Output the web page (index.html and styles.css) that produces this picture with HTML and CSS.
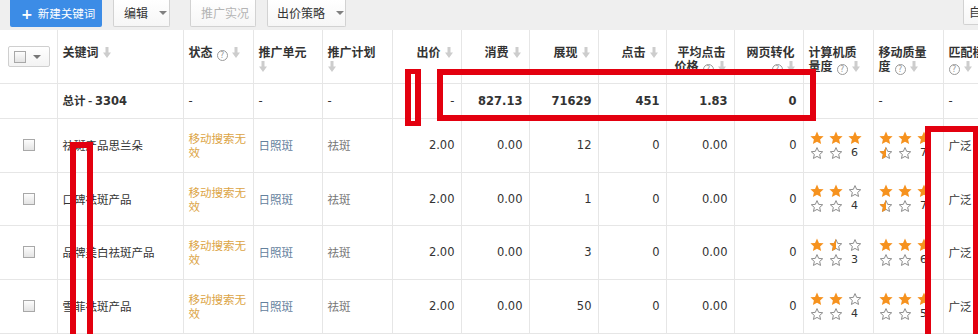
FILE: index.html
```html
<!DOCTYPE html>
<html lang="zh">
<head>
<meta charset="utf-8">
<title>关键词</title>
<link rel="stylesheet" href="styles.css">
</head>
<body>
<svg class="defs" width="0" height="0" aria-hidden="true">
  <defs>
    <symbol id="star-full" viewBox="0 0 14 14">
      <path d="M7 0.6l1.95 4.3 4.65 0.45-3.5 3.1 1.02 4.6L7 10.7l-4.12 2.35 1.02-4.6-3.5-3.1 4.65-0.45z" fill="#f6921e"/>
    </symbol>
    <symbol id="star-empty" viewBox="0 0 14 14">
      <path d="M7 1.6l1.65 3.75 4.05 0.4-3.05 2.7 0.9 4-3.55-2.05-3.55 2.05 0.9-4-3.05-2.7 4.05-0.4z" fill="#fff" stroke="#8c8c8c" stroke-width="1"/>
    </symbol>
    <clipPath id="half-clip"><rect x="0" y="0" width="7" height="14"/></clipPath>
    <symbol id="star-half" viewBox="0 0 14 14">
      <path d="M7 1.6l1.65 3.75 4.05 0.4-3.05 2.7 0.9 4-3.55-2.05-3.55 2.05 0.9-4-3.05-2.7 4.05-0.4z" fill="#fff" stroke="#8c8c8c" stroke-width="1"/>
      <path clip-path="url(#half-clip)" d="M7 0.6l1.95 4.3 4.65 0.45-3.5 3.1 1.02 4.6L7 10.7l-4.12 2.35 1.02-4.6-3.5-3.1 4.65-0.45z" fill="#f6921e"/>
    </symbol>
    <symbol id="sort" viewBox="0 0 8 11">
      <path d="M2.5 0h3v5.5H8L4 11 0 5.5h2.5z" fill="#cdcdcd"/>
    </symbol>
  </defs>
</svg>

<div class="page">
  <div class="toolbar">
    <button class="btn btn-primary"><span class="plus">+</span>新建关键词</button>
    <button class="btn btn-edit">编辑<i class="caret"></i></button>
    <button class="btn btn-disabled">推广实况</button>
    <button class="btn btn-bid">出价策略<i class="caret"></i></button>
    <button class="btn btn-right">自</button>
  </div>

  <table class="grid">
    <colgroup>
      <col class="c-check"><col class="c-kw"><col class="c-70"><col class="c-69"><col class="c-70">
      <col class="c-69"><col class="c-68"><col class="c-69"><col class="c-68"><col class="c-68">
      <col class="c-69"><col class="c-70"><col class="c-70"><col class="c-match">
    </colgroup>
    <thead>
      <tr class="head">
        <th class="th-check"><span class="check-drop"><span class="cb"></span><i class="caret"></i></span></th>
        <th>关键词<svg class="sort"><use href="#sort"/></svg></th>
        <th>状态<span class="q">?</span><svg class="sort"><use href="#sort"/></svg></th>
        <th>推广单元<br><svg class="sort first"><use href="#sort"/></svg></th>
        <th>推广计划<br><svg class="sort first"><use href="#sort"/></svg></th>
        <th class="r">出价<svg class="sort"><use href="#sort"/></svg></th>
        <th class="r">消费<svg class="sort"><use href="#sort"/></svg></th>
        <th class="r">展现<svg class="sort"><use href="#sort"/></svg></th>
        <th class="r">点击<svg class="sort"><use href="#sort"/></svg></th>
        <th class="r">平均点击<br>价格<span class="q">?</span><svg class="sort"><use href="#sort"/></svg></th>
        <th class="r">网页转化<br><span class="q">?</span><svg class="sort"><use href="#sort"/></svg></th>
        <th>计算机质<br>量度<span class="q">?</span><svg class="sort"><use href="#sort"/></svg></th>
        <th>移动质量<br>度<span class="q">?</span><svg class="sort"><use href="#sort"/></svg></th>
        <th>匹配模式<br><span class="q first">?</span><svg class="sort"><use href="#sort"/></svg></th>
      </tr>
    </thead>
    <tbody>
      <tr class="total">
        <td></td>
        <td class="kw b">总计 - <span class="num">3304</span></td>
        <td class="dash">-</td>
        <td class="dash">-</td>
        <td class="dash">-</td>
        <td class="r num">-</td>
        <td class="r num b">827.13</td>
        <td class="r num b">71629</td>
        <td class="r num b">451</td>
        <td class="r num b">1.83</td>
        <td class="r num b">0</td>
        <td></td>
        <td class="dash">-</td>
        <td class="dash">-</td>
      </tr>
      <tr class="row">
        <td class="td-check"><span class="cb"></span></td>
        <td class="kw">祛斑产品思兰朵</td>
        <td class="status">移动搜索无效</td>
        <td class="unit">日照斑</td>
        <td class="plan">祛斑</td>
        <td class="r num">2.00</td>
        <td class="r num">0.00</td>
        <td class="r num">12</td>
        <td class="r num">0</td>
        <td class="r num">0.00</td>
        <td class="r num">0</td>
        <td class="stars"><div class="srow"><svg><use href="#star-full"/></svg><svg><use href="#star-full"/></svg><svg><use href="#star-full"/></svg></div><div class="srow"><svg><use href="#star-empty"/></svg><svg><use href="#star-empty"/></svg><span class="score">6</span></div></td>
        <td class="stars m"><div class="srow"><svg><use href="#star-full"/></svg><svg><use href="#star-full"/></svg><svg><use href="#star-full"/></svg></div><div class="srow"><svg><use href="#star-half"/></svg><svg><use href="#star-empty"/></svg><span class="score">7</span></div></td>
        <td class="match">广泛</td>
      </tr>
      <tr class="row row-b">
        <td class="td-check"><span class="cb"></span></td>
        <td class="kw">口碑祛斑产品</td>
        <td class="status">移动搜索无效</td>
        <td class="unit">日照斑</td>
        <td class="plan">祛斑</td>
        <td class="r num">2.00</td>
        <td class="r num">0.00</td>
        <td class="r num">1</td>
        <td class="r num">0</td>
        <td class="r num">0.00</td>
        <td class="r num">0</td>
        <td class="stars"><div class="srow"><svg><use href="#star-full"/></svg><svg><use href="#star-full"/></svg><svg><use href="#star-empty"/></svg></div><div class="srow"><svg><use href="#star-empty"/></svg><svg><use href="#star-empty"/></svg><span class="score">4</span></div></td>
        <td class="stars m"><div class="srow"><svg><use href="#star-full"/></svg><svg><use href="#star-full"/></svg><svg><use href="#star-full"/></svg></div><div class="srow"><svg><use href="#star-half"/></svg><svg><use href="#star-empty"/></svg><span class="score">7</span></div></td>
        <td class="match">广泛</td>
      </tr>
      <tr class="row">
        <td class="td-check"><span class="cb"></span></td>
        <td class="kw">品牌美白祛斑产品</td>
        <td class="status">移动搜索无效</td>
        <td class="unit">日照斑</td>
        <td class="plan">祛斑</td>
        <td class="r num">2.00</td>
        <td class="r num">0.00</td>
        <td class="r num">3</td>
        <td class="r num">0</td>
        <td class="r num">0.00</td>
        <td class="r num">0</td>
        <td class="stars"><div class="srow"><svg><use href="#star-full"/></svg><svg><use href="#star-half"/></svg><svg><use href="#star-empty"/></svg></div><div class="srow"><svg><use href="#star-empty"/></svg><svg><use href="#star-empty"/></svg><span class="score">3</span></div></td>
        <td class="stars m"><div class="srow"><svg><use href="#star-full"/></svg><svg><use href="#star-full"/></svg><svg><use href="#star-full"/></svg></div><div class="srow"><svg><use href="#star-empty"/></svg><svg><use href="#star-empty"/></svg><span class="score">6</span></div></td>
        <td class="match">广泛</td>
      </tr>
      <tr class="row">
        <td class="td-check"><span class="cb"></span></td>
        <td class="kw">雪菲祛斑产品</td>
        <td class="status">移动搜索无效</td>
        <td class="unit">日照斑</td>
        <td class="plan">祛斑</td>
        <td class="r num">2.00</td>
        <td class="r num">0.00</td>
        <td class="r num">50</td>
        <td class="r num">0</td>
        <td class="r num">0.00</td>
        <td class="r num">0</td>
        <td class="stars"><div class="srow"><svg><use href="#star-full"/></svg><svg><use href="#star-full"/></svg><svg><use href="#star-empty"/></svg></div><div class="srow"><svg><use href="#star-empty"/></svg><svg><use href="#star-empty"/></svg><span class="score">4</span></div></td>
        <td class="stars m"><div class="srow"><svg><use href="#star-full"/></svg><svg><use href="#star-full"/></svg><svg><use href="#star-full"/></svg></div><div class="srow"><svg><use href="#star-empty"/></svg><svg><use href="#star-empty"/></svg><span class="score">5</span></div></td>
        <td class="match">广泛</td>
      </tr>
    </tbody>
  </table>

  <div class="mark mark-bid"></div>
  <div class="mark mark-total"></div>
  <div class="mark mark-kw"></div>
  <div class="mark mark-match"></div>
</div>
</body>
</html>
```

FILE: styles.css
```css
html, body {
  margin: 0;
  padding: 0;
  background: #fff;
}
body {
  width: 978px;
  height: 334px;
  overflow: hidden;
  font-family: "Noto Sans CJK SC", "DejaVu Sans", sans-serif;
  font-size: 12px;
  color: #333;
}
.defs {
  position: absolute;
  width: 0;
  height: 0;
}
.page {
  position: relative;
  width: 978px;
  height: 334px;
  overflow: hidden;
}

/* toolbar */
.toolbar {
  height: 30px;
  background: #efefef;
  display: flex;
  align-items: flex-start;
  padding-left: 10px;
}
.btn {
  height: 27px;
  box-sizing: border-box;
  border: 1px solid #d2d2d2;
  border-top: 0;
  border-radius: 0 0 2px 2px;
  background: linear-gradient(#ffffff, #f6f6f6);
  font-family: "Noto Sans CJK SC", sans-serif;
  font-size: 12px;
  color: #333;
  padding: 0 0 0 10px;
  display: flex;
  align-items: center;
  flex: none;
  line-height: 1;
  white-space: nowrap;
}
.btn-primary {
  width: 92px;
  border: 0;
  background: #3c8ce6;
  color: #fff;
  padding-left: 11px;
  font-size: 11.5px;
}
.plus {
  font-family: "DejaVu Sans", sans-serif;
  font-weight: bold;
  font-size: 14px;
  margin-right: 5px;
}
.btn-edit {
  width: 57px;
  margin-left: 11px;
}
.btn-disabled {
  width: 66px;
  margin-left: 20px;
  color: #b4b4b4;
}
.btn-bid {
  width: 79px;
  margin-left: 11px;
  padding-left: 9px;
}
.btn-right {
  width: 30px;
  height: 25px;
  margin-left: auto;
  margin-right: -15px;
  padding-left: 5px;
}
.caret {
  display: inline-block;
  width: 0;
  height: 0;
  border-left: 4px solid transparent;
  border-right: 4px solid transparent;
  border-top: 4px solid #808080;
  margin-left: 11px;
}

/* grid */
.grid {
  table-layout: fixed;
  border-collapse: collapse;
  width: 1033px;
}
.c-check { width: 57px; }
.c-kw { width: 126px; }
.c-70 { width: 70px; }
.c-69 { width: 69px; }
.c-68 { width: 68px; }
.c-match { width: 90px; }

.grid th, .grid td {
  border: 1px solid #e6e6e6;
  padding: 0 6px 0 5px;
  overflow: hidden;
  white-space: nowrap;
}
.grid th:first-child, .grid td:first-child {
  border-left: 0;
}
.grid thead tr:first-child th {
  border-top: 0;
}
.head {
  height: 53px;
}
.grid th {
  vertical-align: top;
  text-align: left;
  font-weight: bold;
  font-size: 12px;
  line-height: 14px;
  padding-top: 15px;
  color: #333;
}
.grid th.r {
  text-align: right;
  padding-right: 8px;
}
.grid td.r {
  text-align: right;
  padding-right: 6px;
}
.th-check {
  padding-left: 8px !important;
  padding-top: 16px !important;
}
.check-drop {
  display: inline-flex;
  align-items: center;
  width: 42px;
  height: 21px;
  box-sizing: border-box;
  border: 1px solid #cfcfcf;
  border-radius: 2px;
  background: linear-gradient(#ffffff, #f3f3f3);
  padding-left: 5px;
}
.check-drop .caret {
  margin-left: 7px;
  border-top-color: #777;
}
.cb {
  display: inline-block;
  width: 12px;
  height: 12px;
  box-sizing: border-box;
  border: 1px solid #a8a8a8;
  background: linear-gradient(#fdfdfd, #e4e4e4);
  vertical-align: middle;
}
.sort {
  display: inline-block;
  width: 8px;
  height: 11px;
  margin-left: 4px;
  vertical-align: -1px;
}
.sort.first {
  margin-left: 0;
}
.q {
  display: inline-block;
  width: 11px;
  height: 11px;
  box-sizing: border-box;
  border: 1px solid #9a9a9a;
  border-radius: 50%;
  color: #9a9a9a;
  font-family: "DejaVu Sans", sans-serif;
  font-size: 8px;
  font-weight: normal;
  line-height: 9px;
  text-align: center;
  margin-left: 4px;
  vertical-align: -1px;
}
.q.first {
  margin-left: 0;
}

.grid td {
  vertical-align: middle;
  font-size: 11.5px;
  line-height: 14px;
}
.total {
  height: 35px;
}
.row {
  height: 54px;
}
.row-b {
  height: 53px;
}
.b {
  font-weight: bold;
}
.num {
  font-family: "DejaVu Sans", sans-serif;
  font-size: 11px;
}
.kw.b .num {
  font-size: 11.5px;
}
.dash {
  font-family: "DejaVu Sans", sans-serif;
  font-size: 11px;
}
.td-check {
  padding: 0 0 0 23px !important;
  line-height: 0 !important;
}
.status {
  white-space: normal !important;
  color: #dca445;
}
.unit {
  color: #64819d;
}
.plan {
  color: #777;
}
.match {
  color: #333;
}
.stars {
  padding-left: 6px !important;
}
.stars.m {
  padding-left: 5px !important;
}
.srow {
  display: flex;
  gap: 5px;
  height: 15px;
  align-items: center;
}
.srow svg {
  width: 14px;
  height: 14px;
  flex: none;
}
.score {
  font-family: "DejaVu Sans", sans-serif;
  font-size: 11px;
  width: 14px;
  text-align: center;
  color: #333;
}

/* red annotation boxes */
.mark {
  position: absolute;
  box-sizing: border-box;
  border: 6px solid #e3000f;
}
.mark-bid {
  left: 405px;
  top: 69px;
  width: 16px;
  height: 57px;
  border-width: 5px 6px;
}
.mark-total {
  left: 437px;
  top: 69px;
  width: 379px;
  height: 52px;
}
.mark-kw {
  left: 70px;
  top: 142px;
  width: 23px;
  height: 220px;
}
.mark-match {
  left: 925px;
  top: 126px;
  width: 54px;
  height: 240px;
}
```
